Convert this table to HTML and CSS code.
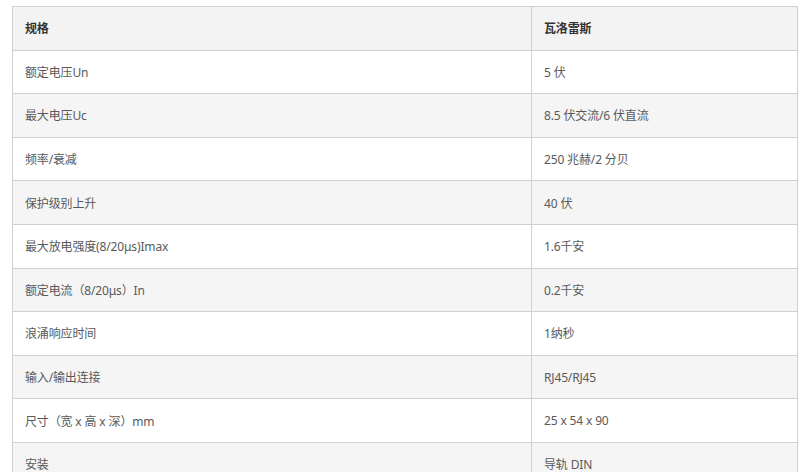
FILE: index.html
```html
<!DOCTYPE html>
<html lang="zh">
<head>
<meta charset="utf-8">
<link rel="stylesheet" href="styles.css">
</head>
<body>
<table class="spec">
  <thead>
    <tr><th class="c1">规格</th><th class="c2">瓦洛雷斯</th></tr>
  </thead>
  <tbody>
    <tr><td>额定电压Un</td><td>5 伏</td></tr>
    <tr><td>最大电压Uc</td><td>8.5 伏交流/6 伏直流</td></tr>
    <tr><td>频率/衰减</td><td>250 兆赫/2 分贝</td></tr>
    <tr><td>保护级别上升</td><td>40 伏</td></tr>
    <tr><td>最大放电强度(8/20μs)Imax</td><td>1.6千安</td></tr>
    <tr><td>额定电流（8/20μs）In</td><td>0.2千安</td></tr>
    <tr><td>浪涌响应时间</td><td>1纳秒</td></tr>
    <tr><td>输入/输出连接</td><td>RJ45/RJ45</td></tr>
    <tr><td>尺寸（宽 x 高 x 深）mm</td><td>25 x 54 x 90</td></tr>
    <tr><td>安装</td><td>导轨 DIN</td></tr>
  </tbody>
</table>
</body>
</html>
```
FILE: styles.css
```css
html, body {
  margin: 0;
  background: #fff;
}
body {
  padding: 6px 0 0 12px;
  font-family: "Noto Sans", "Noto Sans CJK SC", sans-serif;
  font-size: 12px;
  letter-spacing: -0.15px;
  color: #595959;
}
.spec {
  border-collapse: collapse;
  width: 786px;
  table-layout: fixed;
}
.spec th, .spec td {
  border: 1px solid #d0d0d0;
  height: 43.6px;
  padding: 0 12px;
  text-align: left;
  vertical-align: middle;
  box-sizing: border-box;
}
.spec .c1 { width: 519px; }
.spec th {
  background: #f3f3f3;
  color: #333;
  font-weight: bold;
}
.spec tbody tr:nth-child(even) td {
  background: #f5f5f5;
}
```
